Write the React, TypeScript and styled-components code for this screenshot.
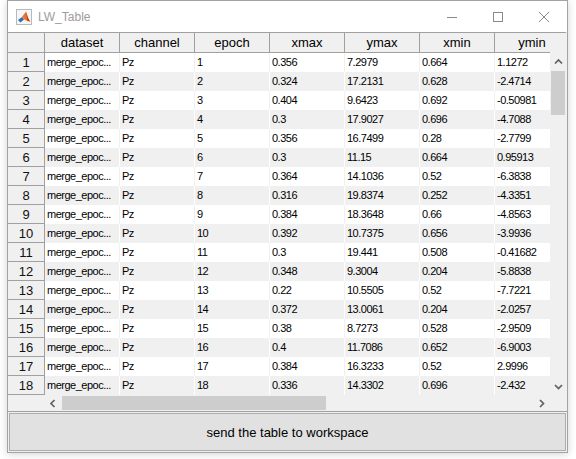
import React from 'react';
import styled, { createGlobalStyle } from 'styled-components';

const GlobalStyle = createGlobalStyle`
  html, body { margin: 0; padding: 0; background: #ffffff; }
  * { box-sizing: border-box; }
  body { font-family: "Liberation Sans", Arial, sans-serif; }
`;

const COLS = ['dataset', 'channel', 'epoch', 'xmax', 'ymax', 'xmin', 'ymin'];

type Row = [string, string, string, string];
const ROWS: Row[] = [
  ['0.356', '7.2979', '0.664', '1.1272'],
  ['0.324', '17.2131', '0.628', '-2.4714'],
  ['0.404', '9.6423', '0.692', '-0.50981'],
  ['0.3', '17.9027', '0.696', '-4.7088'],
  ['0.356', '16.7499', '0.28', '-2.7799'],
  ['0.3', '11.15', '0.664', '0.95913'],
  ['0.364', '14.1036', '0.52', '-6.3838'],
  ['0.316', '19.8374', '0.252', '-4.3351'],
  ['0.384', '18.3648', '0.66', '-4.8563'],
  ['0.392', '10.7375', '0.656', '-3.9936'],
  ['0.3', '19.441', '0.508', '-0.41682'],
  ['0.348', '9.3004', '0.204', '-5.8838'],
  ['0.22', '10.5505', '0.52', '-7.7221'],
  ['0.372', '13.0061', '0.204', '-2.0257'],
  ['0.38', '8.7273', '0.528', '-2.9509'],
  ['0.4', '11.7086', '0.652', '-6.9003'],
  ['0.384', '16.3233', '0.52', '2.9996'],
  ['0.336', '14.3302', '0.696', '-2.432'],
];

const Screen = styled.div`
  width: 576px;
  height: 459px;
  padding-left: 7px;
  background: #ffffff;
`;

const Window = styled.div`
  width: 561px;
  height: 453px;
  border: 1px solid #a3a3a3;
  background: #ffffff;
  box-shadow: 0 1px 8px rgba(0, 0, 0, 0.18);
  display: flex;
  flex-direction: column;
`;

const TitleBar = styled.div`
  height: 31px;
  flex: none;
  display: flex;
  align-items: center;
  padding-left: 8px;
  background: #ffffff;
`;

const AppIcon = styled.svg`
  width: 16px;
  height: 16px;
  margin-right: 6px;
  margin-top: 1px;
`;

const Title = styled.span`
  font-family: "Liberation Sans", Arial, sans-serif;
  font-size: 12px;
  color: #9c9c9c;
`;

const Controls = styled.div`
  margin-left: auto;
  display: flex;
  height: 100%;
`;

const ControlButton = styled.div`
  width: 46px;
  height: 31px;
  display: flex;
  align-items: center;
  justify-content: center;
`;

const Client = styled.div`
  flex: 1;
  background: #f0f0f0;
  display: flex;
  flex-direction: column;
`;

const Panel = styled.div`
  display: grid;
  grid-template-columns: 542px 16px;
  grid-template-rows: 21px 342px 16px;
  border-bottom: 1px solid #a0a0a0;
  background: #f0f0f0;
`;

const HeaderStrip = styled.div`
  display: flex;
  overflow: hidden;
  border-top: 1px solid #a0a0a0;
  background: #f0f0f0;
`;

const HeaderFiller = styled.div`
  border-top: 1px solid #a0a0a0;
  background: #f0f0f0;
`;

const Corner = styled.div`
  flex: none;
  width: 37px;
  height: 20px;
  border-right: 1px solid #a0a0a0;
  border-bottom: 1px solid #a0a0a0;
`;

const HeaderCell = styled.div`
  flex: none;
  width: 75px;
  height: 20px;
  border-right: 1px solid #a0a0a0;
  border-bottom: 1px solid #a0a0a0;
  font-size: 13px;
  line-height: 19px;
  text-align: center;
  color: #000;
  white-space: nowrap;
`;

const Body = styled.div`
  overflow: hidden;
  display: flex;
  flex-direction: column;
`;

const DataRow = styled.div<{ $alt: boolean }>`
  display: flex;
  height: 19px;
  flex: none;
  background: ${(p) => (p.$alt ? '#f0f0f0' : '#ffffff')};
`;

const RowHead = styled.div`
  flex: none;
  width: 37px;
  height: 19px;
  background: #f0f0f0;
  border-right: 1px solid #a0a0a0;
  border-bottom: 1px solid #a0a0a0;
  font-size: 13px;
  line-height: 19px;
  text-align: center;
  color: #111;
`;

const DataCell = styled.div<{ $alt: boolean }>`
  flex: none;
  width: 75px;
  height: 19px;
  padding-left: 2px;
  border-right: 1px solid ${(p) => (p.$alt ? '#ffffff' : '#f0f0f0')};
  font-size: 11px;
  letter-spacing: -0.5px;
  line-height: 19px;
  color: #000;
  white-space: nowrap;
  overflow: hidden;
`;

const VScroll = styled.div`
  display: flex;
  flex-direction: column;
  background: #f0f0f0;
`;

const ArrowBox = styled.div<{ $horizontal?: boolean }>`
  flex: none;
  width: ${(p) => (p.$horizontal ? '17px' : '16px')};
  height: ${(p) => (p.$horizontal ? '16px' : '17px')};
  display: flex;
  align-items: center;
  justify-content: center;
`;

const VThumb = styled.div`
  flex: none;
  height: 44px;
  margin: 1px 1px 0 1px;
  background: #cdcdcd;
`;

const Spacer = styled.div`
  flex: 1;
`;

const BottomStrip = styled.div`
  display: flex;
`;

const RowHeadFiller = styled.div`
  flex: none;
  width: 36px;
`;

const HScroll = styled.div`
  flex: 1;
  display: flex;
  background: #f0f0f0;
`;

const HThumb = styled.div`
  flex: none;
  width: 264px;
  margin: 1px 0 1px 1px;
  background: #cdcdcd;
`;

const ScrollCorner = styled.div`
  background: #f0f0f0;
`;

const SendButton = styled.button`
  margin: 1px 1px 0 1px;
  height: 38px;
  border: 1px solid #adadad;
  background: #e1e1e1;
  font-family: "Liberation Sans", Arial, sans-serif;
  font-size: 13px;
  color: #000;
  padding: 0;
  cursor: default;
`;

const Chevron: React.FC<{ dir: 'up' | 'down' | 'left' | 'right' }> = ({ dir }) => {
  const pts = {
    up: '1,5.5 4.5,2 8,5.5',
    down: '1,2 4.5,5.5 8,2',
    left: '5.5,1 2,4.5 5.5,8',
    right: '2,1 5.5,4.5 2,8',
  }[dir];
  const vertical = dir === 'up' || dir === 'down';
  return (
    <svg width={vertical ? 9 : 8} height={vertical ? 8 : 9} viewBox={vertical ? '0 0 9 8' : '0 0 8 9'}>
      <polyline points={pts} fill="none" stroke="#606060" strokeWidth="1.7" />
    </svg>
  );
};

export default function App() {
  return (
    <>
      <GlobalStyle />
      <Screen>
        <Window>
          <TitleBar>
            <AppIcon viewBox="0 0 16 16">
              <rect x="0.5" y="0.5" width="15" height="15" fill="#f6f6f6" stroke="#b9b9b9" />
              <polygon points="2,11 6,8 8,10.5 4.5,13.5" fill="#2f6fb3" />
              <polygon points="6,8 10,2.5 12,9 14,12.5 9,11" fill="#e8742e" />
              <polygon points="10,2.5 12,9 14,12.5 11.5,12" fill="#c0301c" />
            </AppIcon>
            <Title>LW_Table</Title>
            <Controls>
              <ControlButton>
                <svg width="10" height="10" viewBox="0 0 10 10">
                  <line x1="0" y1="5.5" x2="10" y2="5.5" stroke="#8a8a8a" strokeWidth="1" />
                </svg>
              </ControlButton>
              <ControlButton>
                <svg width="10" height="10" viewBox="0 0 10 10">
                  <rect x="0.5" y="0.5" width="9" height="9" fill="none" stroke="#8a8a8a" strokeWidth="1" />
                </svg>
              </ControlButton>
              <ControlButton>
                <svg width="10" height="10" viewBox="0 0 10 10">
                  <line x1="0" y1="0" x2="10" y2="10" stroke="#8a8a8a" strokeWidth="1" />
                  <line x1="10" y1="0" x2="0" y2="10" stroke="#8a8a8a" strokeWidth="1" />
                </svg>
              </ControlButton>
            </Controls>
          </TitleBar>
          <Client>
            <Panel>
              <HeaderStrip>
                <Corner />
                {COLS.map((c) => (
                  <HeaderCell key={c}>{c}</HeaderCell>
                ))}
              </HeaderStrip>
              <HeaderFiller />
              <Body>
                {ROWS.map((r, i) => {
                  const alt = i % 2 === 1;
                  return (
                    <DataRow key={i} $alt={alt}>
                      <RowHead>{i + 1}</RowHead>
                      <DataCell $alt={alt}>merge_epoc...</DataCell>
                      <DataCell $alt={alt}>Pz</DataCell>
                      <DataCell $alt={alt}>{i + 1}</DataCell>
                      {r.map((v, j) => (
                        <DataCell key={j} $alt={alt}>
                          {v}
                        </DataCell>
                      ))}
                    </DataRow>
                  );
                })}
              </Body>
              <VScroll>
                <ArrowBox>
                  <Chevron dir="up" />
                </ArrowBox>
                <VThumb />
                <Spacer />
                <ArrowBox>
                  <Chevron dir="down" />
                </ArrowBox>
              </VScroll>
              <BottomStrip>
                <RowHeadFiller />
                <HScroll>
                  <ArrowBox $horizontal>
                    <Chevron dir="left" />
                  </ArrowBox>
                  <HThumb />
                  <Spacer />
                  <ArrowBox $horizontal>
                    <Chevron dir="right" />
                  </ArrowBox>
                </HScroll>
              </BottomStrip>
              <ScrollCorner />
            </Panel>
            <SendButton>send the table to workspace</SendButton>
          </Client>
        </Window>
      </Screen>
    </>
  );
}
